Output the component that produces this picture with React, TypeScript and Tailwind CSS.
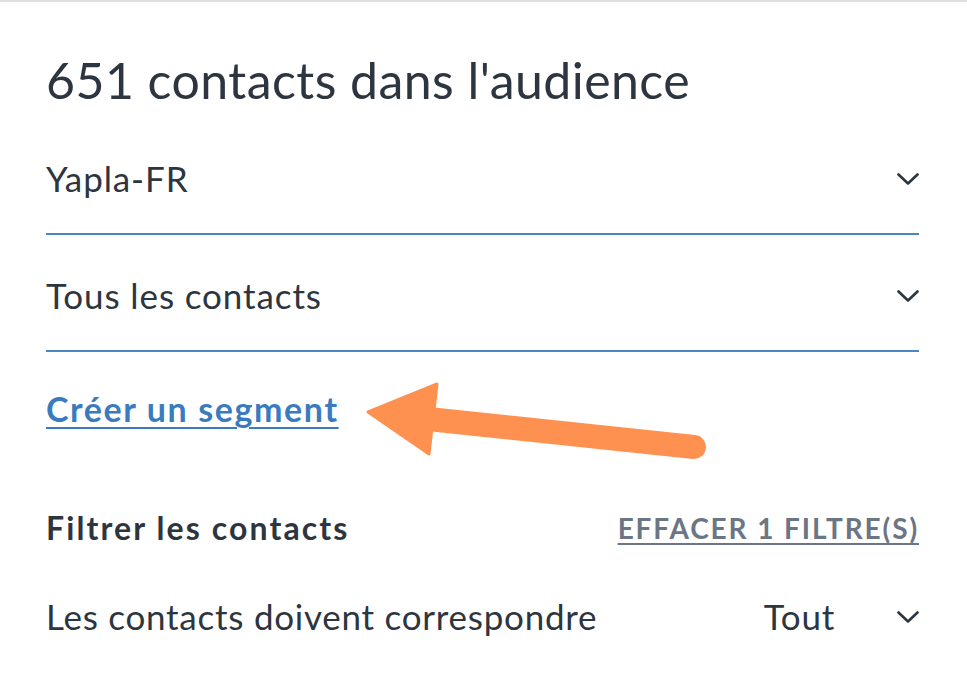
import React from 'react'

const font = { fontFamily: 'Lato, "Open Sans", sans-serif' }

function Chevron() {
  return (
    <svg viewBox="0 0 22 12" className="w-[22px] h-[12px] flex-shrink-0" fill="none" stroke="#2d3640" strokeWidth={2.6} strokeLinecap="round" strokeLinejoin="round">
      <polyline points="1.5 1.5 11 10.5 20.5 1.5" />
    </svg>
  )
}

function SelectRow({ label, top }: { label: string; top: string }) {
  return (
    <div className={top}>
      <div className="flex items-center justify-between h-[35px]">
        <span className="text-[35px] tracking-[0.9px] text-[#2d3640] leading-none">{label}</span>
        <Chevron />
      </div>
      <div className="mt-[37px] h-[2px] bg-[#4a86c2]" />
    </div>
  )
}

export default function App() {
  return (
    <div className="relative w-[967px] h-[682px] bg-white overflow-hidden" style={font}>
      <div className="h-[2px] bg-[#dedede]" />
      <div className="pl-[46px] pr-[48px]">
        <h1 className="pt-[53px] text-[50px] tracking-[0.45px] leading-none text-[#2d3640] font-normal">
          651 contacts dans l'audience
        </h1>

        <SelectRow label="Yapla-FR" top="mt-[56px]" />
        <SelectRow label="Tous les contacts" top="mt-[43px]" />

        <div className="mt-[40px] h-[34px]">
          <a href="#" className="text-[34px] tracking-[1.6px] font-bold text-[#3a7bbf] underline underline-offset-[5px] decoration-[2px] leading-none">
            Créer un segment
          </a>
        </div>

        <div className="mt-[86px] h-[32px] flex items-center justify-between">
          <span className="text-[32px] tracking-[2.1px] font-bold text-[#2d3640] leading-none">Filtrer les contacts</span>
          <a href="#" className="text-[28px] tracking-[1.9px] font-bold text-[#6b7685] underline underline-offset-[4px] decoration-[2px] leading-none">
            EFFACER 1 FILTRE(S)
          </a>
        </div>

        <div className="mt-[55px] h-[35px] flex items-center">
          <span className="flex-1 text-[35px] tracking-[0.75px] text-[#2d3640] leading-none">Les contacts doivent correspondre</span>
          <span className="text-[35px] tracking-[0.75px] text-[#2d3640] leading-none mr-[62px]">Tout</span>
          <Chevron />
        </div>
      </div>

      <svg className="absolute left-0 top-0 pointer-events-none" width="967" height="682" viewBox="0 0 967 682">
        <line x1="433" y1="419.5" x2="694" y2="447" stroke="#ff9150" strokeWidth="24" strokeLinecap="round" />
        <polygon points="368,412 437,384 429,454" fill="#ff9150" stroke="#ff9150" strokeWidth="3" strokeLinejoin="round" />
      </svg>
    </div>
  )
}
